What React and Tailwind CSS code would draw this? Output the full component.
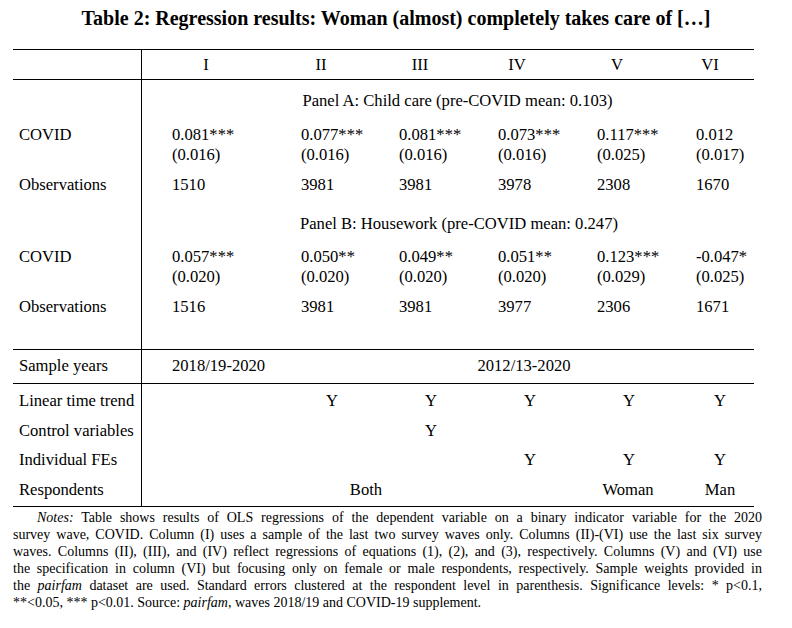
import React from "react";

const GRID = "grid grid-cols-[129px_148px_99px_99px_99px_99px_68px]";
const pads = ["pl-[30px]", "pl-[11px]", "pl-[10px]", "pl-[10px]", "pl-[10px]", "pl-[10px]"];

function Label({ children, className = "" }) {
  return <div className={`border-r border-black pl-[6px] ${className}`}>{children}</div>;
}

function Row({ h, label, children, labelClass = "" }) {
  return (
    <div className={`${GRID} ${h}`}>
      <Label className={labelClass}>{label}</Label>
      {children}
    </div>
  );
}

const A = {
  covid: ["0.081***", "0.077***", "0.081***", "0.073***", "0.117***", "0.012"],
  se: ["(0.016)", "(0.016)", "(0.016)", "(0.016)", "(0.025)", "(0.017)"],
  obs: ["1510", "3981", "3981", "3978", "2308", "1670"],
};
const B = {
  covid: ["0.057***", "0.050**", "0.049**", "0.051**", "0.123***", "-0.047*"],
  se: ["(0.020)", "(0.020)", "(0.020)", "(0.020)", "(0.029)", "(0.025)"],
  obs: ["1516", "3981", "3981", "3977", "2306", "1671"],
};

function Estimates({ d, covidH, obsH }) {
  return (
    <>
      <Row h={covidH} label="COVID" labelClass="pt-[5px] leading-[20px]">
        {d.covid.map((v, i) => (
          <div key={i} className={`${pads[i]} pt-[5px] leading-[20px]`}>
            <div>{v}</div>
            <div>{d.se[i]}</div>
          </div>
        ))}
      </Row>
      <Row h={obsH} label="Observations" labelClass="flex items-center pt-[2px]">
        {d.obs.map((v, i) => (
          <div key={i} className={`${pads[i]} flex items-center pt-[2px]`}>{v}</div>
        ))}
      </Row>
    </>
  );
}

export default function App() {
  return (
    <div className="w-[792px] h-[628px] bg-white text-black font-['Liberation_Serif',serif] text-[16.6px] leading-[20px] overflow-hidden">
      <div className="h-[49px] pt-[8px] text-center text-[20px] font-bold leading-[20px]">
        Table 2: Regression results: Woman (almost) completely takes care of […]
      </div>
      <div className="ml-[13px] w-[741px] border-t border-black">
        {/* header */}
        <div className={`${GRID} h-[30px] border-b border-black`}>
          <Label />
          <div className="flex items-center justify-center pr-[20px] pt-[1px]">I</div>
          <div className="flex items-center justify-center pr-[37px] pt-[1px]">II</div>
          <div className="flex items-center justify-center pr-[37px] pt-[1px]">III</div>
          <div className="flex items-center justify-center pr-[41px] pt-[1px]">IV</div>
          <div className="flex items-center justify-center pr-[39px] pt-[1px]">V</div>
          <div className="flex items-center justify-center pr-[20px] pt-[1px]">VI</div>
        </div>
        {/* panels */}
        <div className="border-b border-black">
          <Row h="h-[40px]" label="">
            <div className="col-span-6 flex items-center justify-center pl-[19px] pt-[1px]">
              Panel A: Child care (pre-COVID mean: 0.103)
            </div>
          </Row>
          <Estimates d={A} covidH="h-[44px]" obsH="h-[40px]" />
          <Row h="h-[38px]" label="">
            <div className="col-span-6 flex items-center justify-center pl-[22px] pt-[1px]">
              Panel B: Housework (pre-COVID mean: 0.247)
            </div>
          </Row>
          <Estimates d={B} covidH="h-[45px]" obsH="h-[38px]" />
          <Row h="h-[24px]" label="" />
        </div>
        {/* sample years */}
        <div className={`${GRID} h-[34px] border-b border-black`}>
          <Label className="flex items-center pb-[2px]">Sample years</Label>
          <div className="flex items-center pl-[30px] pb-[2px]">2018/19-2020</div>
          <div className="col-span-5 flex items-center justify-center pl-[4px] pb-[2px]">2012/13-2020</div>
        </div>
        {/* specs */}
        <div className="border-b border-black">
          <Row h="h-[2px]" label="" />
          <Row h="h-[30px]" label="Linear time trend" labelClass="flex items-center">
            <div />
            <div className="flex items-center justify-center pr-[15px]">Y</div>
            <div className="flex items-center justify-center pr-[15px]">Y</div>
            <div className="flex items-center justify-center pr-[15px]">Y</div>
            <div className="flex items-center justify-center pr-[15px]">Y</div>
            <div className="flex items-center justify-center">Y</div>
          </Row>
          <Row h="h-[29px]" label="Control variables" labelClass="flex items-center">
            <div />
            <div />
            <div className="flex items-center justify-center pr-[15px]">Y</div>
            <div />
            <div />
            <div />
          </Row>
          <Row h="h-[30px]" label="Individual FEs" labelClass="flex items-center">
            <div />
            <div />
            <div />
            <div className="flex items-center justify-center pr-[15px]">Y</div>
            <div className="flex items-center justify-center pr-[15px]">Y</div>
            <div className="flex items-center justify-center">Y</div>
          </Row>
          <Row h="h-[30px]" label="Respondents" labelClass="flex items-center">
            <div className="col-span-4 flex items-center justify-center pl-[3px]">Both</div>
            <div className="flex items-center justify-center pr-[17px]">Woman</div>
            <div className="flex items-center justify-center">Man</div>
          </Row>
          <Row h="h-[1px]" label="" />
        </div>
      </div>
      {/* notes */}
      <div className="ml-[13px] w-[749px] pt-[2px] text-[14px] leading-[17px]">
        <div className="pl-[24px] text-justify [text-align-last:justify]">
          <i>Notes:</i> Table shows results of OLS regressions of the dependent variable on a binary indicator variable for the 2020
        </div>
        <div className="text-justify [text-align-last:justify]">
          survey wave, COVID. Column (I) uses a sample of the last two survey waves only. Columns (II)-(VI) use the last six survey
        </div>
        <div className="text-justify [text-align-last:justify]">
          waves. Columns (II), (III), and (IV) reflect regressions of equations (1), (2), and (3), respectively. Columns (V) and (VI) use
        </div>
        <div className="text-justify [text-align-last:justify]">
          the specification in column (VI) but focusing only on female or male respondents, respectively. Sample weights provided in
        </div>
        <div className="text-justify [text-align-last:justify]">
          the <i>pairfam</i> dataset are used. Standard errors clustered at the respondent level in parenthesis. Significance levels: * p&lt;0.1,
        </div>
        <div>
          **&lt;0.05, *** p&lt;0.01. Source: <i>pairfam</i>, waves 2018/19 and COVID-19 supplement.
        </div>
      </div>
    </div>
  );
}
